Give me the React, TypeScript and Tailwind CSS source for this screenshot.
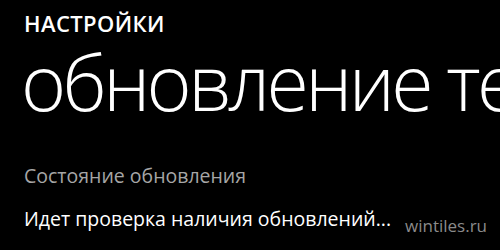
export default function App() {
  return (
    <div className="w-[500px] h-[250px] bg-black overflow-hidden relative" style={{ fontFamily: '"Open Sans", "Noto Sans", sans-serif' }}>
      <div className="pl-[24px] pt-[9px]">
        <div className="text-white text-[22px] font-semibold leading-[28px] tracking-[0.4px]">НАСТРОЙКИ</div>
        <div className="text-white text-[77px] font-light leading-[90px] whitespace-nowrap -ml-[3px] tracking-[-3.6px]">обновление телефона</div>
        <div className="text-[#a6a6a6] text-[19.5px] leading-[26px] mt-[36px]">Состояние обновления</div>
        <div className="text-white text-[19.5px] leading-[26px] mt-[17px]">Идет проверка наличия обновлений...</div>
      </div>
      <div className="absolute left-[405px] top-[215px] text-[#8a8a8a] text-[17px] leading-[22px]">wintiles.ru</div>
    </div>
  );
}
